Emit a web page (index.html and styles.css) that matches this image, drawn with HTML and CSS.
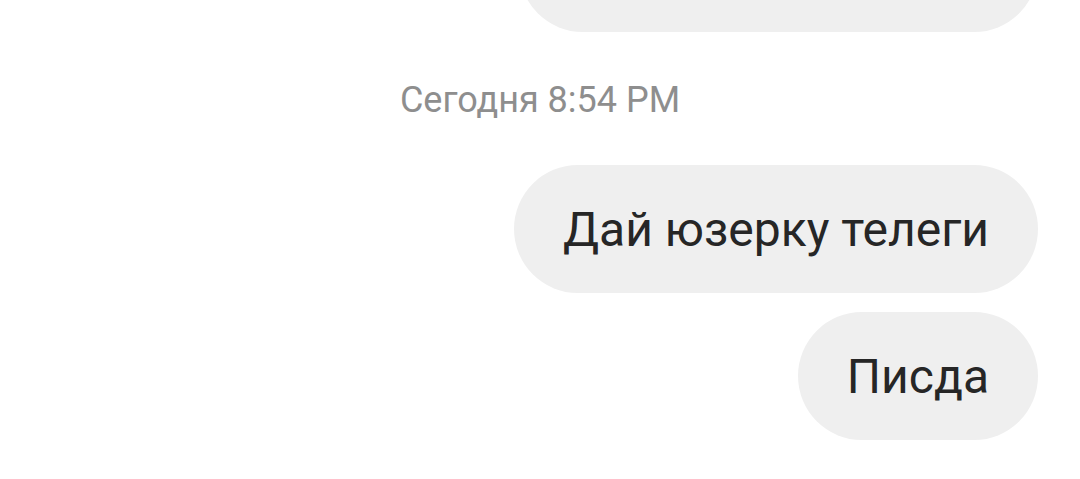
FILE: index.html
```html
<!DOCTYPE html>
<html lang="ru">
<head>
<meta charset="utf-8">
<link rel="stylesheet" href="styles.css">
</head>
<body>
<div class="chat">
  <div class="bubble bubble-prev"><span class="text">&nbsp;</span></div>
  <div class="time">Сегодня 8:54 PM</div>
  <div class="bubble"><span class="text">Дай юзерку телеги</span></div>
  <div class="bubble"><span class="text">Писда</span></div>
</div>
</body>
</html>
```
FILE: styles.css
```css
html, body {
  margin: 0;
  padding: 0;
  background: #ffffff;
  height: 100%;
  overflow: hidden;
}
.chat {
  display: flex;
  flex-direction: column;
  align-items: flex-end;
  padding-right: 42px;
  font-family: Roboto, "Noto Sans", sans-serif;
}
.bubble {
  background: #efefef;
  border-radius: 64px;
  height: 128px;
  box-sizing: border-box;
  padding: 0 49px;
  display: flex;
  align-items: center;
  color: #262626;
  font-size: 48px;
  margin-bottom: 19px;
}
.bubble-prev {
  width: 519px;
  margin-top: -96px;
  margin-bottom: 0;
}
.time {
  align-self: center;
  margin-left: 42px;
  color: #8e8e8e;
  font-size: 36px;
  line-height: 42px;
  margin-top: 47px;
  margin-bottom: 44px;
}
```
